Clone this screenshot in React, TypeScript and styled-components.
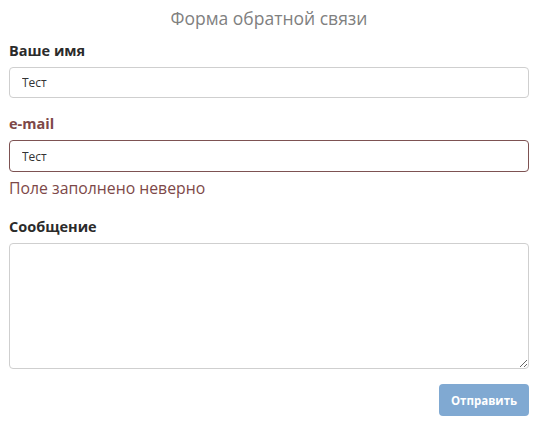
import styled, { createGlobalStyle } from "styled-components";

const Global = createGlobalStyle`
    html, body {
        margin: 0;
        padding: 0;
        background: #fff;
    }
    body {
        font-family: "Open Sans", "Noto Sans", sans-serif;
    }
`

const Formulario = styled.form`
    width: 539px;
    box-sizing: border-box;
    padding: 6px 10px 0 9px;
    display: flex;
    flex-direction: column;
`

const Titulo = styled.h2`
    margin: 0 0 11px 0;
    text-align: center;
    font-size: 17.5px;
    font-weight: 400;
    color: #808080;
    line-height: 24px;
`

const Grupo = styled.div`
    display: flex;
    flex-direction: column;
    margin-bottom: 16px;
`

const Rotulo = styled.label<{ $erro?: boolean }>`
    font-size: 14.5px;
    font-weight: 700;
    line-height: 20px;
    margin-bottom: 6px;
    color: ${(p) => (p.$erro ? "#7d4848" : "#2b2b2b")};
`

const Campo = styled.input<{ $erro?: boolean }>`
    box-sizing: border-box;
    height: ${(p) => (p.$erro ? "32px" : "31px")};
    padding: 0 12px;
    border: 1px solid ${(p) => (p.$erro ? "#7d5252" : "#cfcfcf")};
    border-radius: 4px;
    font-family: inherit;
    font-size: 12px;
    color: #333;
    outline: none;
`

const Erro = styled.span`
    margin: 6px 0 3px 0;
    font-size: 15.8px;
    color: #7d4848;
    line-height: 20px;
`

const Texto = styled.textarea`
    box-sizing: border-box;
    height: 126px;
    border: 1px solid #cfcfcf;
    border-radius: 4px;
    font-family: inherit;
    font-size: 12px;
    resize: vertical;
    outline: none;
`

const Rodape = styled.div`
    display: flex;
    justify-content: flex-end;
    margin-top: -1px;
`

const Botao = styled.button`
    width: 90px;
    height: 32px;
    border: none;
    border-radius: 4px;
    background-color: #80a9d2;
    color: #fff;
    font-family: inherit;
    font-size: 11.5px;
    font-weight: 700;
    cursor: pointer;
`

export default function App() {
    return (
        <>
            <Global />
            <Formulario onSubmit={(e) => e.preventDefault()}>
                <Titulo>Форма обратной связи</Titulo>

                <Grupo>
                    <Rotulo htmlFor="nome">Ваше имя</Rotulo>
                    <Campo id="nome" type="text" defaultValue="Тест" />
                </Grupo>

                <Grupo>
                    <Rotulo htmlFor="email" $erro>e-mail</Rotulo>
                    <Campo id="email" type="text" defaultValue="Тест" $erro />
                    <Erro>Поле заполнено неверно</Erro>
                </Grupo>

                <Grupo>
                    <Rotulo htmlFor="mensagem">Сообщение</Rotulo>
                    <Texto id="mensagem" />
                </Grupo>

                <Rodape>
                    <Botao type="submit">Отправить</Botao>
                </Rodape>
            </Formulario>
        </>
    )
}
